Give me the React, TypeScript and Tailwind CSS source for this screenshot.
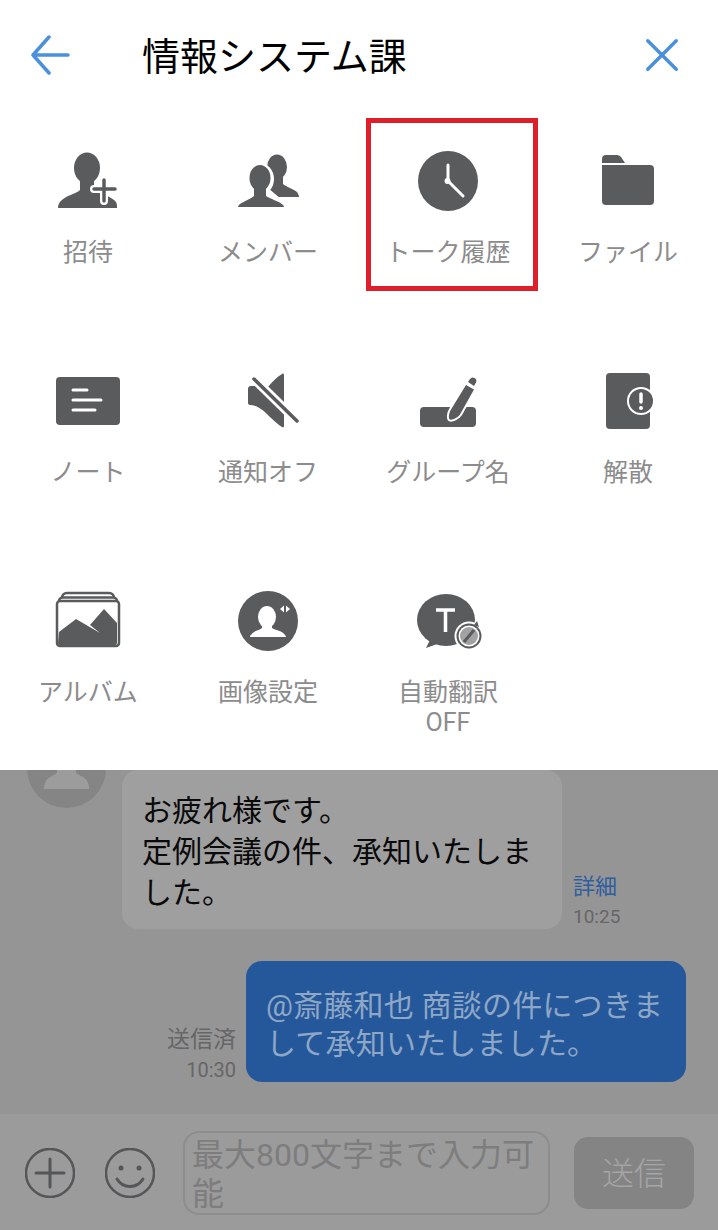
const D = "#5a5b5d";

function Icon({ box, children }: { box: string; children: React.ReactNode }) {
  return (
    <svg viewBox={box} className="h-[80px] w-[80px] overflow-visible" fill={D}>
      {children}
    </svg>
  );
}

const items: { label: React.ReactNode; icon: React.ReactNode }[] = [
  {
    label: "招待",
    icon: (
      <Icon box="48 140 80 80">
        <ellipse cx="87" cy="168" rx="13" ry="15.5" />
        <path d="M80 178h14v12c4 4 18 6 22 12 1 2 1 4 1 6H58c0-3 1-5 2-6 4-6 16-8 20-12z" />
        <path d="M104 180v21M94 189h21" stroke="#fff" strokeWidth="8" strokeLinecap="round" />
        <path d="M104 180v21M94 189h21" stroke={D} strokeWidth="3.5" strokeLinecap="round" />
      </Icon>
    ),
  },
  {
    label: "メンバー",
    icon: (
      <Icon box="228 140 80 80">
        <ellipse cx="277" cy="167" rx="10" ry="12.5" />
        <path d="M271 174h12v10c3 3 11 5 14 8 1 2 2 3 2 5h-42v-20z" />
        <ellipse cx="260" cy="179" rx="14" ry="16" fill="#fff" />
        <path d="M238 212l8-12 8-6 14-6 19 16v8z" fill="#fff" />
        <ellipse cx="260" cy="178" rx="10.5" ry="13" />
        <path d="M254 186h12v10c4 3 13 5 17 9 1 1 1 2 1 2h-46c0-1 1-2 2-3 4-3 11-5 14-8z" />
      </Icon>
    ),
  },
  {
    label: "トーク履歴",
    icon: (
      <Icon box="408 140 80 80">
        <circle cx="448" cy="181" r="30" />
        <path d="M448 165v16l15 15" stroke="#fff" strokeWidth="3" fill="none" strokeLinecap="round" />
        <circle cx="447.5" cy="181" r="3" fill="#fff" />
      </Icon>
    ),
  },
  {
    label: "ファイル",
    icon: (
      <Icon box="588 140 80 80">
        <path d="M602 163v-4a4 4 0 0 1 4-4h11c2 0 3 1 4 2l4 6z" />
        <path d="M602 165h48a4 4 0 0 1 4 4v32a4 4 0 0 1-4 4h-44a4 4 0 0 1-4-4z" />
      </Icon>
    ),
  },
  {
    label: "ノート",
    icon: (
      <Icon box="48 360 80 80">
        <rect x="56" y="377" width="64" height="48" rx="4" />
        <path d="M73 390h14M73 400h28M73 410h22" stroke="#fff" strokeWidth="3" strokeLinecap="round" />
      </Icon>
    ),
  },
  {
    label: "通知オフ",
    icon: (
      <Icon box="228 360 80 80">
        <path d="M248 389c0-2 1-3 3-3 6 0 12 0 17 1 4-5 9-10 14-13 1-1 2 0 2 1v51c0 1-1 2-2 1-5-3-11-9-16-14-6-5-11-8-16-8-1 0-2-1-2-2z" />
        <path d="M250 375l48 47" stroke="#fff" strokeWidth="9" />
        <path d="M254 379l43 42" stroke={D} strokeWidth="3.5" strokeLinecap="round" />
      </Icon>
    ),
  },
  {
    label: "グループ名",
    icon: (
      <Icon box="408 360 80 80">
        <rect x="420" y="407" width="56" height="20" rx="4" />
        <path d="M466 385l8 4.500-14 25c-2 3-8 6-10 5-2-1-1-7 1-10z" fill="#fff" stroke="#fff" strokeWidth="4" strokeLinejoin="round" />
        <path d="M466 385l8 4.500-14 25c-2 3-8 6-10 5-2-1-1-7 1-10z" />
        <path d="M468 382l2-3a3.500 3.500 0 0 1 6 3.500l-2 3.500z" />
      </Icon>
    ),
  },
  {
    label: "解散",
    icon: (
      <Icon box="588 360 80 80">
        <rect x="606" y="373" width="44" height="56" rx="4" />
        <circle cx="641" cy="401" r="14" fill="#fff" />
        <circle cx="641" cy="401" r="12" />
        <path d="M641 394v8" stroke="#fff" strokeWidth="3.5" strokeLinecap="round" />
        <circle cx="641" cy="408" r="2" fill="#fff" />
      </Icon>
    ),
  },
  {
    label: "アルバム",
    icon: (
      <Icon box="48 580 80 80">
        <path d="M62 598c0-3 2-5 5-5h42c3 0 5 2 5 5" stroke={D} strokeWidth="2.5" fill="none" />
        <path d="M59 601c0-2 2-3.500 4-3.500h50c2 0 4 1.500 4 3.500" stroke={D} strokeWidth="2.5" fill="none" />
        <rect x="57" y="601" width="62" height="45" rx="3" fill="#fff" stroke={D} strokeWidth="2.5" />
        <path d="M59 632l17-13 24 14-10-8 14-16 13 14v20a2 2 0 0 1-2 2H60a2 2 0 0 1-2-2z" />
      </Icon>
    ),
  },
  {
    label: "画像設定",
    icon: (
      <Icon box="228 580 80 80">
        <circle cx="268" cy="621" r="30" />
        <ellipse cx="267" cy="617" rx="9" ry="11" fill="#fff" />
        <path d="M262 624h10v4c3 2 11 3 13 7 1 1 1 2 1 2h-36c0-1 0-2 1-2 2-4 9-5 11-7z" fill="#fff" />
        <path d="M280 609l4-3.500v7zM286 605.500l4 3.500-4 3.500z" fill="#fff" />
      </Icon>
    ),
  },
  {
    label: (
      <>
        自動翻訳
        <br />
        OFF
      </>
    ),
    icon: (
      <Icon box="408 580 80 80">
        <ellipse cx="446" cy="620" rx="29" ry="26" />
        <path d="M430 640l-4 8 14-5z" />
        <path d="M436 610h19M445.500 610v22" stroke="#fff" strokeWidth="3.500" fill="none" />
        <circle cx="469" cy="636" r="14.500" fill="#fff" />
        <circle cx="469" cy="636" r="12.500" />
        <circle cx="469" cy="636" r="10.500" fill="#fff" />
        <circle cx="469" cy="636" r="9" fill="#a2a2a2" />
        <path d="M464 642l10-12" stroke={D} strokeWidth="3" />
        <path d="M477 621l2 6-5-2z" />
      </Icon>
    ),
  },
];

export default function App() {
  return (
    <div className="relative h-[1230px] w-[718px] overflow-hidden bg-[#959596] font-['Roboto','Noto_Sans_CJK_JP',sans-serif]">
      <div className="relative z-10 h-[770px] bg-white">
        <header className="flex h-[110px] items-center pl-[28px] pr-[38px]">
          <svg viewBox="0 0 44 40" className="h-[40px] w-[44px]" fill="none" stroke="#4a90dc" strokeWidth="3.500" strokeLinecap="round" strokeLinejoin="round">
            <path d="M21 2L5 20l16 18M5 20h35" />
          </svg>
          <h1 className="ml-[71px] mt-[4px] flex-1 text-[38px] font-normal leading-none -translate-x-[1px] text-black">情報システム課</h1>
          <svg viewBox="0 0 36 36" className="h-[36px] w-[36px]" fill="none" stroke="#4a90dc" strokeWidth="3.500" strokeLinecap="round">
            <path d="M3.750 3.750l28.500 28.500M32.250 3.750l-28.500 28.500" />
          </svg>
        </header>
        <div className="relative -ml-[2px] mt-[30px] grid w-[720px] grid-cols-4">
          {items.map((it, i) => (
            <div key={i} className="flex h-[220px] flex-col items-center">
              {it.icon}
              <div className="mt-[18px] text-center text-[25px] font-normal leading-[30px] text-[#8c8c8d]">{it.label}</div>
            </div>
          ))}
        </div>
        <div className="absolute left-[366px] top-[118px] h-[173px] w-[172px] border-[5px] border-[#dc1f2b]" />
      </div>

      <div className="relative flex h-[344px] flex-col bg-[#959596]">
        <div className="absolute -top-[41px] left-[27px] h-[79px] w-[79px] overflow-hidden rounded-full bg-[#858586]">
          <svg viewBox="0 0 79 79" className="h-[79px] w-[79px]" fill="#9c9c9c">
            <path d="M30 30h19v14c4 3 10 4 12 10 1 2 1 4 1 6H17c0-2 0-4 1-6 2-6 8-7 12-10z" />
          </svg>
        </div>
        <div className="ml-[122px] flex items-end">
          <div className="h-[159px] w-[440px] rounded-[16px] bg-[#9f9f9f] pl-[20px] pr-[21px] pt-[20px] text-[30px] leading-[41px] text-[#0a0a0a]">
            お疲れ様です。
            <br />
            定例会議の件、承知いたしました。
          </div>
          <div className="-mb-[3px] ml-[11px] flex flex-col">
            <span className="text-[22px] leading-[30px] text-[#2f5e9e]">詳細</span>
            <span className="text-[19px] leading-[30px] text-[#666667]">10:25</span>
          </div>
        </div>
        <div className="mt-[32px] flex items-end justify-end pr-[32px]">
          <div className="-mb-[3px] mr-[10px] flex flex-col items-end">
            <span className="text-[23px] leading-[30px] text-[#666667]">送信済</span>
            <span className="text-[20px] leading-[30px] text-[#666667]">10:30</span>
          </div>
          <div className="h-[121px] w-[440px] rounded-[16px] bg-[#25589b] pl-[20px] pr-[20px] pt-[26px] text-[30px] leading-[38px] tracking-[0.2px] text-[#8ea7c6]">
            @斎藤和也 商談の件につきまして承知いたしました。
          </div>
        </div>
      </div>

      <div className="flex h-[116px] items-center bg-[#9b9b9c] pl-[25px] pt-[2px]">
        <svg viewBox="0 0 50 50" className="h-[50px] w-[50px]" fill="none" stroke="#555657" strokeWidth="2.500" strokeLinecap="round">
          <circle cx="25" cy="25" r="24" />
          <path d="M25 11v28M11 25h28" strokeWidth="3" />
        </svg>
        <svg viewBox="0 0 50 50" className="ml-[30px] h-[50px] w-[50px]" fill="none" stroke="#555657" strokeWidth="2.500" strokeLinecap="round">
          <circle cx="25" cy="25" r="24" />
          <circle cx="16" cy="20" r="2.500" fill="#555657" stroke="none" />
          <circle cx="34" cy="20" r="2.500" fill="#555657" stroke="none" />
          <path d="M12 31c6 10 20 10 26 0" strokeWidth="3" />
        </svg>
        <div className="ml-[28px] h-[84px] w-[367px] rounded-[16px] border-2 border-[#8d8d8e] pl-[7px] pr-[6px] pt-[3px] text-[32px] leading-[39px] text-[#7d7d7e]">
          最大800文字まで入力可能
        </div>
        <div className="ml-[24px] flex h-[72px] w-[120px] items-center justify-center rounded-[14px] bg-[#848485] pt-[2px] text-[32px] font-light text-[#a5a5a6]">
          送信
        </div>
      </div>
    </div>
  );
}
